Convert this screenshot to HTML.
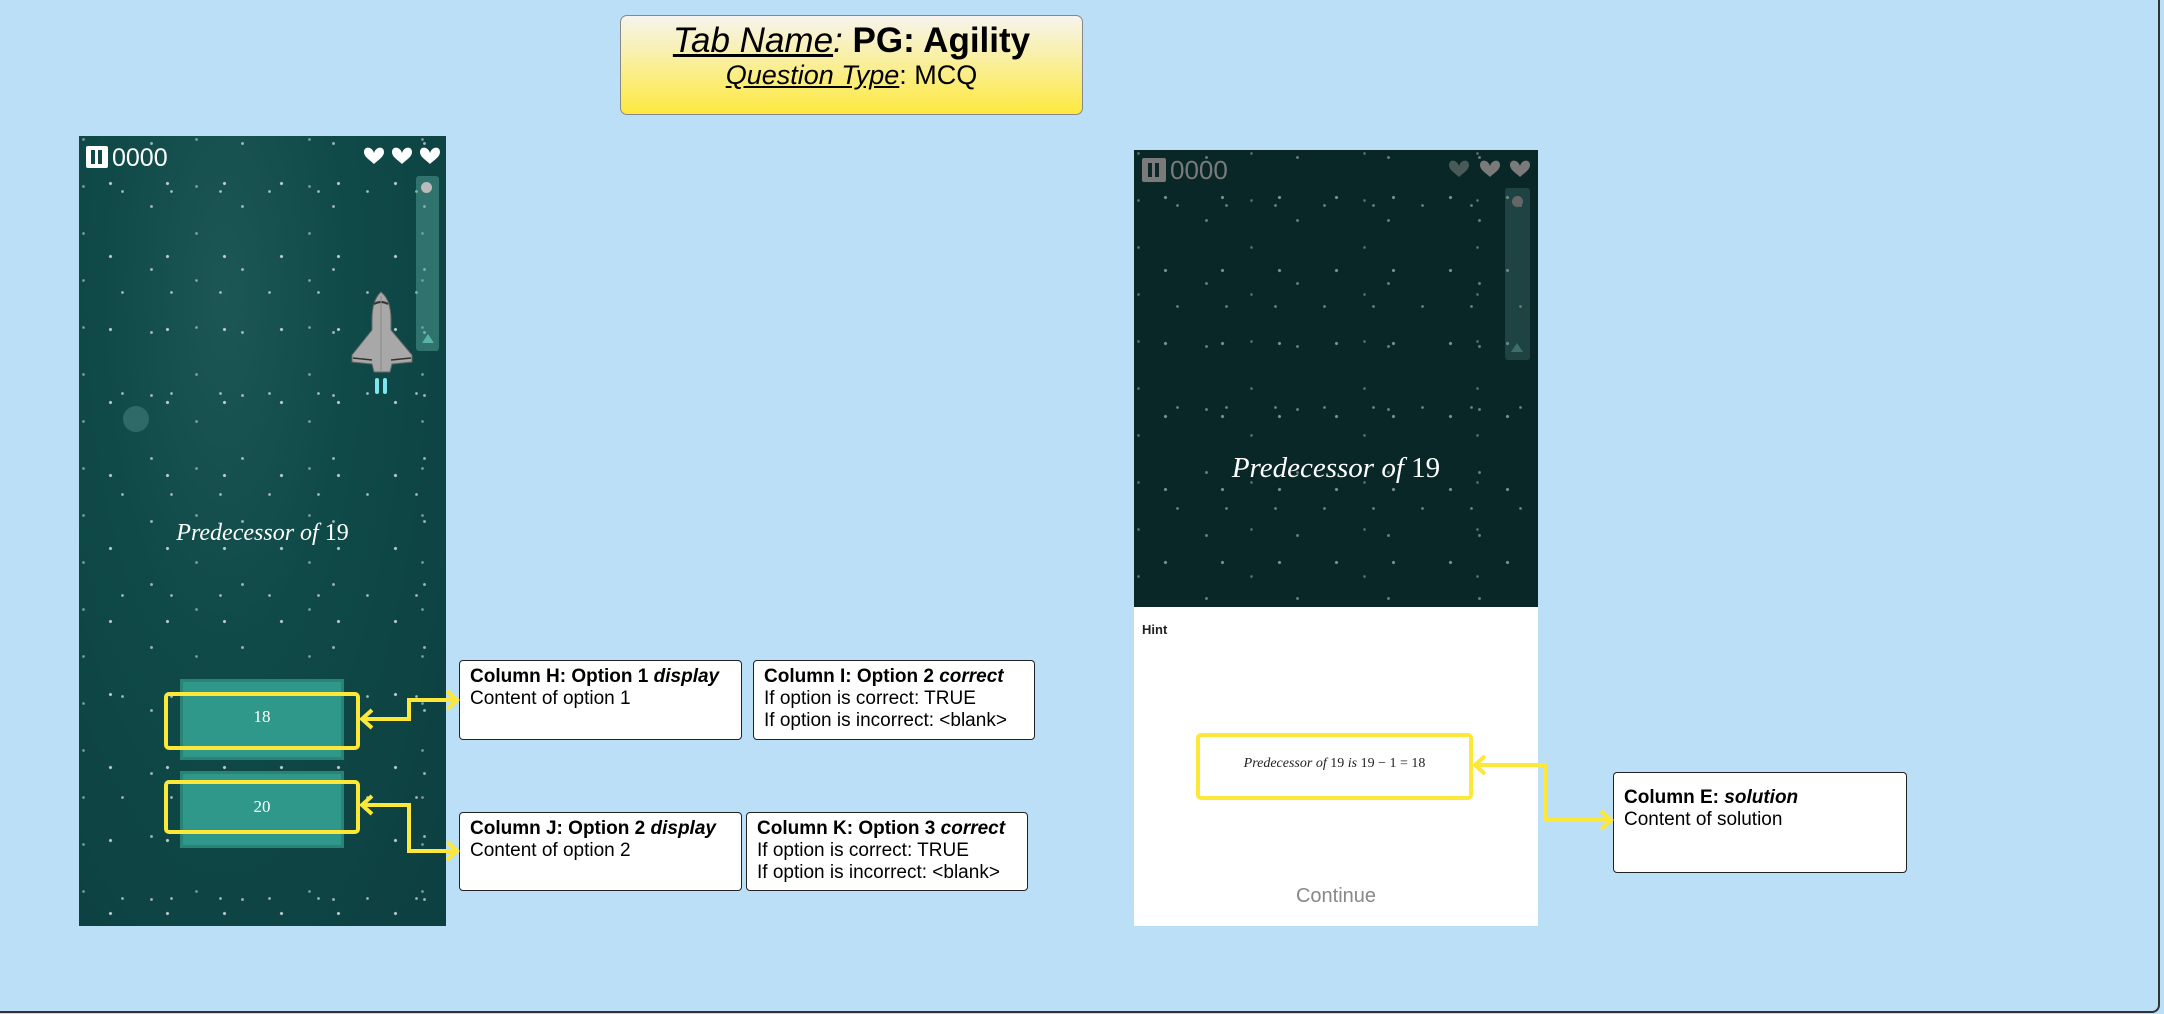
<!DOCTYPE html>
<html><head><meta charset="utf-8"><style>
*{margin:0;padding:0;box-sizing:border-box}
body{width:2164px;height:1014px;background:#bcdff8;position:relative;overflow:hidden;font-family:"Liberation Sans",sans-serif}
.frame{position:absolute;left:0;top:-10px;width:2160px;height:1023px;border:2px solid #333;border-top:none;border-left:none;border-radius:0 0 8px 0}
.abs{position:absolute}
.title{left:620px;top:15px;width:463px;height:100px;border:1.5px solid #888;border-radius:7px;background:linear-gradient(#f6f4ee,#fde93e);text-align:center}
.stars{background-image:
radial-gradient(circle,rgba(255,255,255,.9) 1.2px,transparent 1.9px),
radial-gradient(circle,rgba(255,255,255,.75) 1.1px,transparent 1.8px),
radial-gradient(circle,rgba(255,255,255,.8) 1px,transparent 1.7px),
radial-gradient(circle,rgba(255,255,255,.6) 1px,transparent 1.7px);
background-size:57px 73px,91px 63px,49px 101px,113px 47px;
background-position:3px 11px,27px 39px,19px 5px,61px 27px}
.box{position:absolute;background:#fff;border:1.5px solid #222;border-radius:4px;padding:5px 10px;font-size:19px;line-height:22px;color:#000}
.yl{position:absolute;border:4px solid #fde83a;border-radius:5px}
svg{position:absolute;left:0;top:0}
</style></head><body>
<div class="frame"></div>
<div class="abs title">
<div style="font-size:35px;margin-top:5px;line-height:39px"><i><u>Tab Name</u></i><i>:</i> <b>PG: Agility</b></div>
<div style="font-size:27px;line-height:31px"><i><u>Question Type</u></i>: MCQ</div>
</div>

<!-- left phone -->
<div class="abs" style="left:79px;top:136px;width:367px;height:790px;background:radial-gradient(ellipse at 40% 20%,#1d5755,#0f4a48 40%,#0d3f40)"></div>
<div class="abs stars" style="left:79px;top:136px;width:367px;height:790px;opacity:.8"></div>
<div class="abs" style="left:86px;top:146px;width:22px;height:22px;background:#fff;border-radius:2px"><div style="position:absolute;left:5px;top:4px;width:4px;height:14px;background:#0f4a48"></div><div style="position:absolute;left:12px;top:4px;width:4px;height:14px;background:#0f4a48"></div></div>
<div class="abs" style="left:112px;top:144px;font-size:25px;color:#fff;line-height:28px">0000</div>
<div class="abs" style="left:416px;top:176px;width:23px;height:175px;background:rgba(90,170,160,.45);border-radius:3px"><div style="position:absolute;left:5px;top:6px;width:11px;height:11px;border-radius:50%;background:#bbb"></div><div style="position:absolute;left:6px;top:158px;border:6px solid transparent;border-bottom:9px solid #5ab3a8;border-top:none"></div></div>
<div class="abs" style="left:123px;top:406px;width:26px;height:26px;border-radius:50%;background:#2f6a68"></div>
<div class="abs" style="left:79px;top:520px;width:367px;text-align:center;font-family:'Liberation Serif',serif;font-style:italic;font-size:24px;color:#fff">Predecessor of <span style="font-style:normal">19</span></div>
<div class="abs" style="left:180px;top:679px;width:164px;height:81px;background:#2f988a;border:3px solid #2a8476"></div>
<div class="abs" style="left:180px;top:771px;width:164px;height:77px;background:#2f988a;border:3px solid #2a8476"></div>
<div class="abs" style="left:180px;top:707px;width:164px;text-align:center;font-family:'Liberation Serif',serif;font-size:17px;color:#fff">18</div>
<div class="abs" style="left:180px;top:797px;width:164px;text-align:center;font-family:'Liberation Serif',serif;font-size:17px;color:#fff">20</div>
<div class="yl" style="left:164px;top:692px;width:196px;height:58px"></div>
<div class="yl" style="left:164px;top:780px;width:196px;height:54px"></div>

<div class="box" style="left:459px;top:660px;width:283px;height:80px"><b>Column H: Option 1 <i>display</i></b><br>Content of option 1</div>
<div class="box" style="left:753px;top:660px;width:282px;height:80px"><b>Column I: Option 2 <i>correct</i></b><br>If option is correct: TRUE<br>If option is incorrect: &lt;blank&gt;</div>
<div class="box" style="left:459px;top:812px;width:283px;height:79px"><b>Column J: Option 2 <i>display</i></b><br>Content of option 2</div>
<div class="box" style="left:746px;top:812px;width:282px;height:79px"><b>Column K: Option 3 <i>correct</i></b><br>If option is correct: TRUE<br>If option is incorrect: &lt;blank&gt;</div>

<!-- right phone -->
<div class="abs" style="left:1134px;top:150px;width:404px;height:457px;background:#0a2728"></div>
<div class="abs stars" style="left:1134px;top:150px;width:404px;height:457px;opacity:.55"></div>
<div class="abs" style="left:1134px;top:607px;width:404px;height:319px;background:#fff"></div>
<div class="abs" style="left:1142px;top:158px;width:24px;height:24px;background:#7a7a7a;border-radius:2px"><div style="position:absolute;left:6px;top:5px;width:4px;height:14px;background:#0a2728"></div><div style="position:absolute;left:13px;top:5px;width:4px;height:14px;background:#0a2728"></div></div>
<div class="abs" style="left:1170px;top:156px;font-size:26px;color:#7a7a7a;line-height:28px">0000</div>
<div class="abs" style="left:1505px;top:188px;width:25px;height:172px;background:rgba(70,120,115,.35);border-radius:3px"><div style="position:absolute;left:7px;top:8px;width:11px;height:11px;border-radius:50%;background:#666"></div><div style="position:absolute;left:6px;top:155px;border:6px solid transparent;border-bottom:9px solid #3d6e6a;border-top:none"></div></div>
<div class="abs" style="left:1134px;top:452px;width:404px;text-align:center;font-family:'Liberation Serif',serif;font-style:italic;font-size:29px;color:#fff">Predecessor of <span style="font-style:normal">19</span></div>
<div class="abs" style="left:1142px;top:622px;font-size:13px;font-weight:bold;color:#222">Hint</div>
<div class="yl" style="left:1196px;top:733px;width:277px;height:67px"></div>
<div class="abs" style="left:1196px;top:756px;width:277px;text-align:center;font-family:'Liberation Serif',serif;font-size:14px;color:#222"><i>Predecessor of</i> 19 <i>is</i> 19 − 1 = 18</div>
<div class="abs" style="left:1134px;top:885px;width:404px;text-align:center;font-size:20px;color:#888">Continue</div>
<div class="box" style="left:1613px;top:772px;width:294px;height:101px;padding-top:14px"><b>Column E: <i>solution</i></b><br>Content of solution</div>

<svg width="2164" height="1014" style="pointer-events:none">
<defs><path id="h" d="M0 6 C-2 -1 -10 -1 -10 5 C-10 10 -4 13 0 17 C4 13 10 10 10 5 C10 -1 2 -1 0 6Z"/></defs>
<use href="#h" x="374" y="147" fill="#fff"/><use href="#h" x="402" y="147" fill="#fff"/><use href="#h" x="430" y="147" fill="#fff"/>
<use href="#h" x="1459" y="160" fill="#4a5a58"/><use href="#h" x="1490" y="160" fill="#7a7a7a"/><use href="#h" x="1520" y="160" fill="#7a7a7a"/>
<g>
<path d="M381 292 Q372 300 372 320 L372 330 L352 355 L352 362 L372 364 L374 372 L390 372 L392 364 L412 362 L412 355 L391 330 L391 320 Q391 300 381 292Z" fill="#a8a8a8" stroke="#666" stroke-width="1"/>
<path d="M374 304 Q381 300 388 304" stroke="#333" stroke-width="2" fill="none"/>
<path d="M381 296 V372" stroke="#888" stroke-width="1"/>
<path d="M353 358 L372 360 M391 360 L411 358" stroke="#333" stroke-width="1.5"/>
<rect x="375" y="378" width="4" height="16" rx="2" fill="#7fe6f0"/><rect x="383" y="378" width="4" height="16" rx="2" fill="#7fe6f0"/>
</g>
<g stroke="#fde83a" stroke-width="4" fill="none">
<path d="M362 719 H409 V700 H457"/><path d="M372 710 L362 719 L372 728"/><path d="M447 691 L457 700 L447 709"/>
<path d="M362 805 H409 V851 H457"/><path d="M372 796 L362 805 L372 814"/><path d="M447 842 L457 851 L447 860"/>
<path d="M1475 765 H1545 V820 H1611"/><path d="M1485 756 L1475 765 L1485 774"/><path d="M1601 811 L1611 820 L1601 829"/>
</g>
</svg>
</body></html>
